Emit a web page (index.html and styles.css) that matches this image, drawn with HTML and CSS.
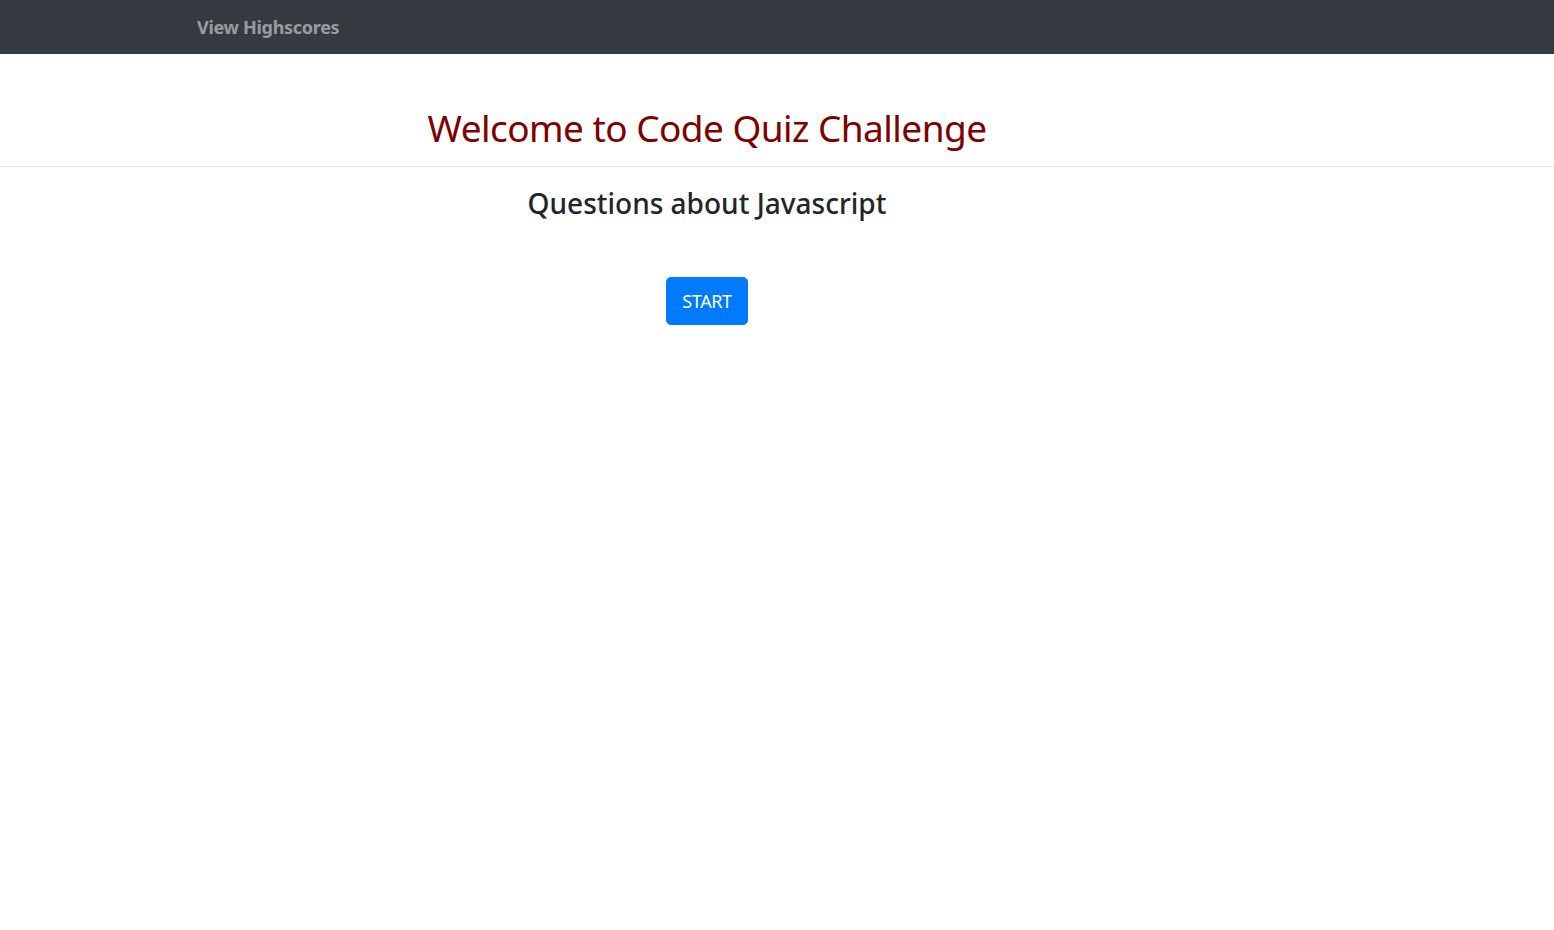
FILE: index.html
```html
<!DOCTYPE html>
<html lang="en">
<head>
<meta charset="utf-8">
<title>Code Quiz</title>
<link rel="stylesheet" href="styles.css">
</head>
<body>
<nav class="navbar">
  <a class="brand" href="#">View Highscores</a>
</nav>
<header class="hero">
  <h1 class="title">Welcome to Code Quiz Challenge</h1>
</header>
<hr class="divider">
<main class="content">
  <h3 class="subtitle">Questions about Javascript</h3>
  <button class="btn-start" type="button">START</button>
</main>
</body>
</html>
```
FILE: styles.css
```css
* { box-sizing: border-box; }
html, body { margin: 0; padding: 0; }
body {
  font-family: "Noto Sans", "Open Sans", "Liberation Sans", sans-serif;
  color: #212529;
  background: #fff;
}
.navbar {
  height: 54px;
  background: #343a40;
  display: flex;
  align-items: center;
  padding-left: 197px;
}
.brand {
  color: rgba(255,255,255,.5);
  font-weight: 700;
  font-size: 18px;
  letter-spacing: -0.3px;
  text-decoration: none;
  line-height: 1;
}
.hero {
  padding-right: 140px;
  text-align: center;
  padding-top: 50px;
}
.title {
  margin: 0;
  font-size: 37px;
  letter-spacing: -0.55px;
  font-weight: 400;
  line-height: 48px;
  color: #800000;
}
.divider {
  margin: 14px 0 0;
  border: 0;
  border-top: 1px solid rgba(0,0,0,.1);
}
.content {
  padding-right: 140px;
  display: flex;
  flex-direction: column;
  align-items: center;
}
.subtitle {
  margin: 19px 0 0;
  font-size: 28px;
  font-weight: 500;
  line-height: 34px;
}
.btn-start {
  margin-top: 57px;
  font-family: inherit;
  font-size: 18px;
  letter-spacing: -0.4px;
  line-height: 30px;
  padding: 8px 15px;
  color: #fff;
  background: #007bff;
  border: 1px solid #007bff;
  border-radius: 4.8px;
}
```
